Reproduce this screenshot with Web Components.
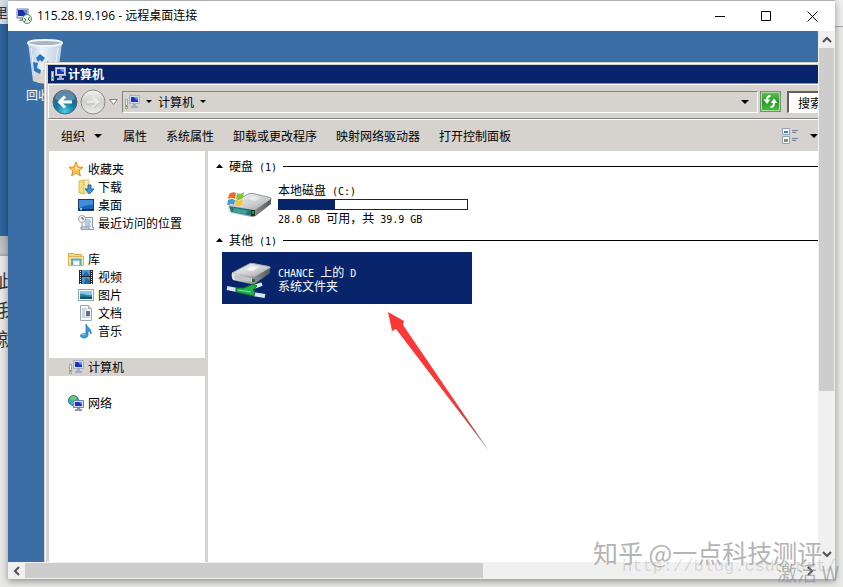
<!DOCTYPE html>
<html lang="zh-CN">
<head>
<meta charset="utf-8">
<title>115.28.19.196 - 远程桌面连接</title>
<style>
  html, body { margin: 0; height: 100%; overflow: hidden; }
  body { font: 12px/18px "Noto Sans CJK SC", "Liberation Sans", sans-serif; color: #000; background: #e4e4e2; }
</style>
</head>
<body>
<host-screen>
  <remote-window caption="115.28.19.196 - 远程桌面连接">
    <recycle-bin></recycle-bin>
    <explorer-window caption="计算机">
      <address-bar slot="nav" place="计算机"></address-bar>
      <command-bar slot="commands"></command-bar>
      <nav-tree slot="tree">
        <nav-group>
          <nav-item icon="star">收藏夹</nav-item>
          <nav-item icon="download" child>下载</nav-item>
          <nav-item icon="desktop" child>桌面</nav-item>
          <nav-item icon="recent" child>最近访问的位置</nav-item>
        </nav-group>
        <nav-group>
          <nav-item icon="library">库</nav-item>
          <nav-item icon="video" child>视频</nav-item>
          <nav-item icon="picture" child>图片</nav-item>
          <nav-item icon="document" child>文档</nav-item>
          <nav-item icon="music" child>音乐</nav-item>
        </nav-group>
        <nav-group><nav-item icon="computer" selected>计算机</nav-item></nav-group>
        <nav-group><nav-item icon="network">网络</nav-item></nav-group>
      </nav-tree>
      <drive-group label="硬盘" count="(1)">
        <drive-tile icon="disk" used="30">
          <span slot="name">本地磁盘<tt-run> (C:)</tt-run></span>
          <span slot="info"><tt-run>28.0 GB </tt-run>可用，共<tt-run> 39.9 GB</tt-run></span>
        </drive-tile>
      </drive-group>
      <drive-group label="其他" count="(1)">
        <drive-tile icon="netdisk" selected>
          <span slot="name"><tt-run>CHANCE </tt-run>上的<tt-run> D</tt-run></span>
          <span slot="info">系统文件夹</span>
        </drive-tile>
      </drive-group>
    </explorer-window>
    <red-arrow></red-arrow>
  </remote-window>
  <water-mark slot="over"></water-mark>
</host-screen>

<script>
const PC = `<rect x="5.5" y="1.5" width="10" height="8" fill="#d7dcea" stroke="#a9b0c8"/><path d="M7 3h7v5H7z" fill="#1a32c4"/><path d="M10 3h4v3c-2 0-3-1-4-3z" fill="#6f8cf0"/><path d="M9 10h3v2h2v2H7v-2h2z" fill="#a3acc6"/><rect x="1.500" y="5.500" width="2" height="9" fill="#e8eae4" stroke="#a5a89c"/><path d="M2 11h1v2H2z" fill="#58b83c"/>`;

const DISK = `<defs>
  <linearGradient id="top" x1="0" y1="0" x2="1" y2="1"><stop offset="0" stop-color="#fdfdfd"/><stop offset=".6" stop-color="#c8cacc"/><stop offset="1" stop-color="#8d9093"/></linearGradient>
  <linearGradient id="front"><stop offset="0" stop-color="#e8e9ea"/><stop offset=".5" stop-color="#9b9ea0"/><stop offset="1" stop-color="#56595b"/></linearGradient></defs>`;

const ICONS = {
  computer: [16, 16, PC],
  remote: [16, 16, `<rect x="1" y="1" width="11" height="9" fill="#cfd6e8" stroke="#7b87a8"/><path d="M2 2h9v6H2z" fill="#1c2da8"/><path d="M7 2h4v4C9 6 8 4 7 2z" fill="#6b7fdc"/><path d="M4 10h4v3H3z" fill="#9ba6c2"/><circle cx="11" cy="11" r="4.500" fill="#e9f2e5" stroke="#5d8a56"/><path d="M8 10l2 2-2 2M14 9l-2 2 2 2" fill="none" stroke="#3c7b3a"/>`],
  star: [16, 16, `<path d="M8 1l2 5 5 .3-4 3.500 1.400 5L8 12l-4.400 2.800L5 9.800 1 6.300 6 6z" fill="#ffc64d" stroke="#e18a1f"/><path d="M8 3l1 4 3 .5-4 1z" fill="#fff0b0"/>`],
  download: [16, 16, `<path d="M1 2l5-1v14l-5-1z" fill="#f7dc7e" stroke="#e0b95a"/><path d="M6 1h5v13H6z" fill="#fbeaa5" stroke="#e2c67c"/><path d="M10 6h3v4h3l-4.500 5L7 10h3z" fill="#3b95dc" stroke="#1b67aa"/>`],
  desktop: [16, 16, `<rect x=".5" y="2.500" width="15" height="11" fill="#1b63b8" stroke="#1a3a70"/><path d="M1 3h14v5C9 7 5 10 1 11z" fill="#3f8fdc"/><path d="M1 12h14v1H1z" fill="#17294a"/><path d="M2 11h2v2H2z" fill="#7bd0f0"/>`],
  recent: [16, 16, `<path d="M4 2.500h10.500v10H16v2H4z" fill="#eef3f9" stroke="#8a9bb0"/><path d="M7 5h5M7 7h6M7 9h5M7 11h6" stroke="#7f9fc4"/><circle cx="4" cy="4" r="3.500" fill="#fafafa" stroke="#98a2ad"/><path d="M4 2v2h2" fill="none" stroke="#556"/><path d="M3 12h8v2.500H3z" fill="#c4d2e2" stroke="#8a9bb0"/>`],
  library: [16, 16, `<path d="M.5 2.500h5l1 1h7v3H.5z" fill="#f5da7b" stroke="#d6aa43"/><path d="M.5 5.500h15v9H.5z" fill="#fbe89c" stroke="#ddb24f"/><path d="M4 14V8.500h8.500V14" fill="#d4effa" stroke="#57a7d5" stroke-width="2"/><path d="M6 11h5v3H6z" fill="#fff"/>`],
  video: [16, 16, `<path d="M1 1h14v14H1z" fill="#24272c"/><path d="M4 1h8v6H4zM4 8h8v7H4z" fill="#4e9bd4"/><path d="M4 7l4-5 4 5zM5 15l3-6 4 2v4z" fill="#2866a4"/><path d="M2.500 2v13M13.500 2v13" stroke="#e8e8e8" stroke-dasharray="1 1"/>`],
  picture: [16, 16, `<rect x=".5" y="2.500" width="15" height="11" fill="#fff" stroke="#91a3af"/><path d="M2 4h12v8H2z" fill="#82c9ef"/><path d="M2 7c4-1 6 2 12 1v4H2z" fill="#2c8797"/><path d="M2 10c4-1 8 0 12 0v2H2z" fill="#194f77"/>`],
  document: [16, 16, `<path d="M2.500.5h8l3 3v12h-11z" fill="#fff" stroke="#9aa6b2"/><path d="M10.500.5v3h3" fill="#dfe7ef" stroke="#9aa6b2"/><path d="M4 4h5M4 6h3M4 8h3M4 10h3M4 12h8" stroke="#9badbf"/><path d="M8 6h4v5H8z" fill="#4c779c"/>`],
  music: [16, 16, `<path d="M8 1c1 4 6 4 5 10-1-3-3-3-3-3v4c0 2-2 3-4 3-3 0-5-3-2-4 1-.5 3-.5 4 0z" fill="#33a0e8" stroke="#1665a8" stroke-width=".7"/><path d="M4 12c1-1 2-1 3 0" stroke="#a8e3ff" fill="none"/>`],
  network: [16, 16, `<circle cx="5.500" cy="5.500" r="5" fill="#35a6cf" stroke="#28799a"/><path d="M2 3c3-3 5-2 7 0L6 6 3 5zM2 8l4-1 1 3z" fill="#74c95a"/><path d="M5.500 5.500h10v7h-10z" fill="#d5dcec" stroke="#7482a6"/><path d="M7 7h7v4H7z" fill="#1833be"/><path d="M11 7h3v3z" fill="#6c8af0"/><path d="M9 13h3v1h2v2H7v-2h2z" fill="#8c98b8"/>`],
  refresh: [21, 21, `<defs><linearGradient id="g" x2="0" y2="1"><stop offset="0" stop-color="#6bc25c"/><stop offset=".5" stop-color="#249c24"/><stop offset="1" stop-color="#48c340"/></linearGradient></defs><rect x=".5" y=".5" width="20" height="20" fill="url(#g)" stroke="#7a8a78"/><path d="M1.500 1.500h18v18h-18z" fill="none" stroke="#a9dda0"/><path d="M10.500 5Q7 5 7 9" fill="none" stroke="#fff" stroke-width="2"/><path d="M3.500 8.500h7L7 13zM10.500 12h7L14 7.500z" fill="#fff"/><path d="M10.500 16Q14 16 14 12" fill="none" stroke="#fff" stroke-width="2"/>`],
  view: [16, 16, `<path d="M.5.500h7v6h-7zM.5 8.500h7v7h-7z" fill="#fff" stroke="#91a2ae"/><path d="M2 3h4v2H2z" fill="#2f83b7"/><path d="M2 11h4v3H2z" fill="#799b57"/><path d="M10 2.500h6M10 4.500h4M10 10.500h6M10 12.500h4" stroke="#71809f"/>`],
  back: [26, 26, `<defs><radialGradient id="b" cx=".5" cy=".9" r=".8"><stop offset="0" stop-color="#48d0e6"/><stop offset=".5" stop-color="#1479a4"/><stop offset="1" stop-color="#2b5d88"/></radialGradient></defs><circle cx="13" cy="13" r="12" fill="url(#b)" stroke="#59656f"/><path d="M3 10a10 9 0 0 1 20 0q-10 5-20 0z" fill="#fff" opacity=".25"/><path d="M20 13H8M13 7.500L7.500 13l5.500 5.500" fill="none" stroke="#fff" stroke-width="3"/>`],
  forward: [26, 26, `<defs><linearGradient id="f" x2="0" y2="1"><stop offset="0" stop-color="#f4f4f3"/><stop offset=".5" stop-color="#cfcfcd"/><stop offset="1" stop-color="#ececeb"/></linearGradient></defs><circle cx="13" cy="13" r="12" fill="url(#f)" stroke="#8c8c89"/><path d="M7 13h11M13 8l5 5-5 5" fill="none" stroke="#e9e9e8" stroke-width="3"/><path d="M7 15h8M14 19l5-5" fill="none" stroke="#b7b7b4"/>`],
  disk: [46, 32, `${DISK}<path d="M2 17L22 6q2-1 5-.5l17 4q2 1 1 2L29 24z" fill="url(#top)" stroke="#96999b"/><path d="M2 17q-1 5 2 8l22 4q3 0 5-2l14-11v-5L29 22z" fill="url(#front)"/><path d="M3 18l24 4v6L5 24z" fill="#2a7180"/><path d="M8 20l14 3-3 3-12-2z" fill="#39a59a"/><path d="M25 22h4v6h-4z" fill="#173c20"/><path d="M27 23v3" stroke="#67e053"/><path d="M3 6q4-3 7-1L9 11q-3-2-7 0z" fill="#ed6a2c"/><path d="M11 5q4 2 7-1l-1 6q-4 3-7 1z" fill="#83c43d"/><path d="M2 12q4-2 7 0l-1 5q-3-2-7 0z" fill="#3f9bdd"/><path d="M10 12q4 2 7-1l-1 6q-4 2-7 0z" fill="#fbc52f"/><path d="M26 8l8 2-5 3-7-2z" fill="#e9eaeb"/>`],
  netdisk: [46, 42, `${DISK}<path d="M6 16L23 7q2-1 4-.5l16 3q2 1 1 2L29 21z" fill="url(#top)" stroke="#a9acae"/><path d="M6 16q-1 4 1 7l18 4q3 1 5-1l14-10v-5L28 20z" fill="url(#front)"/><path d="M8 18l18 3v4L9 22z" fill="#c3c6c8"/><path d="M26 22h3v3h-3z" fill="#226c2a"/><path d="M25 9l8 1-6 4-7-1z" fill="#f4f4f4"/><path d="M28 30l8-3" stroke="#dfe3e6" stroke-width="4"/><path d="M1 31l10 2" stroke="#dce4f4" stroke-width="4"/><path d="M27 37l12 2" stroke="#dce4f4" stroke-width="4"/><path d="M10 31l8 0 9-4 4 2-4 4 2 2-1 4-18-4z" fill="#1fae4c" stroke="#0b7130"/><path d="M12 33l13 2" stroke="#78e58e"/>`],
  bin: [38, 48, `<defs><linearGradient id="c"><stop offset="0" stop-color="#b8cde2"/><stop offset=".4" stop-color="#f4f8fc"/><stop offset="1" stop-color="#c3d2e4"/></linearGradient></defs><path d="M2 5h34l-5 38q-12 5-24 0z" fill="url(#c)" opacity=".95"/><path d="M7 34l24-2-1 11q-11 5-22 0z" fill="#d8c9c0" opacity=".7"/><ellipse cx="19" cy="5" rx="17" ry="3" fill="#a9b6c1" stroke="#f2f5f8" stroke-width="2"/><path d="M5 10l4 28M32 10l-4 28" stroke="#fff" opacity=".7"/><path d="M10 20l4-4 5 4-3 4-2-2-2 2zM7 24l5 1-1 5 4 2-1 4-6-3zM18 27l4-4 3 7-3 4-5-1 3-3z" fill="#2c76bc"/>`],
};

// Small helper so each element only declares its markup.
class Base extends HTMLElement {
  constructor() {
    super();
    this.attachShadow({ mode: "open" });
  }
  connectedCallback() {
    this.shadowRoot.innerHTML = `<style>
      :host,*{box-sizing:border-box}
      button{margin:0;padding:0;border:0;background:none;font:inherit;color:inherit;display:flex;align-items:center;justify-content:center}
      a{color:inherit;text-decoration:none}
    </style>` + this.render();
  }
  attr(name) { return this.getAttribute(name) || ""; }
}

class UiIcon extends Base {
  render() {
    const [w, h, body] = ICONS[this.attr("name")];
    return `<style>:host{display:block;flex:none}svg{display:block}</style>
      <svg width="${w}" height="${h}" viewBox="0 0 ${w} ${h}" aria-hidden="true">${body}</svg>`;
  }
}

class DownTri extends Base {
  render() {
    return `<style>:host{display:block;flex:none;width:var(--tri,8px)}svg{display:block;width:100%}</style>
      <svg viewBox="0 0 8 4" aria-hidden="true"><path d="M0 0h8L4 4z"/></svg>`;
  }
}

// Half-width characters: 6px each, like the bitmap font of the old desktop.
class TtRun extends Base {
  render() {
    return `<style>:host{font-family:"DejaVu Sans Mono",monospace;font-size:10px;line-height:1;white-space:pre}</style><slot></slot>`;
  }
}

class HostScreen extends Base {
  render() {
    return `<style>
      :host{display:block;position:relative;height:100vh;overflow:hidden;padding:1px 8px 8px;
        background:linear-gradient(#c4c4c2,#c4c4c2) 0 0/100% 1px no-repeat,linear-gradient(#e8e8e7,#e8e8e7)}
      .left{position:absolute;left:0;top:0;width:8px;height:100%;overflow:hidden;display:flex;flex-direction:column;font-size:18px;line-height:29px;color:#333}
      .left div{flex:none;white-space:nowrap;text-indent:-2px}
      .left .tab{height:24px;line-height:24px;background:#d3dce7;font-size:14px;text-indent:-6px}
      .blue{height:212px;background:#2f639a}
      .bar{height:20px;background:linear-gradient(#b6b9bb,#c5c5c5 80%,#a8a8a8);margin-bottom:10px}
      .right{position:absolute;right:0;top:0;width:8px;height:27px;border-bottom:1px solid #aaa;background:#eee}
    </style>
    <div class="left"><div class="tab">里</div><div class="blue"></div><div class="bar"></div><div>此</div><div>我</div><div>就</div></div>
    <div class="right"></div>
    <slot></slot><slot name="over"></slot>`;
  }
}

class ScrollBar extends Base {
  render() {
    const v = this.hasAttribute("vertical");
    const [a, b] = v ? ["M1 7l4-4 4 4", "M1 3l4 4 4-4"] : ["M7 1L3 5l4 4", "M3 1l4 4-4 4"];
    const arrow = d => `<svg width="10" height="10" viewBox="0 0 10 10"><path d="${d}" fill="none" stroke="#505050" stroke-width="2"/></svg>`;
    return `<style>
      :host{display:flex;flex-direction:${v ? "column" : "row"};background:#f0f0f0}
      button{flex:none;width:${v ? 15 : 17}px;height:${v ? 17 : 15}px}
      .track{flex:1;display:flex;flex-direction:inherit}
      .thumb{flex:0 0 ${this.attr("size")}%;background:#cdcdcd}
    </style>
    <button aria-label="${v ? "向上" : "向左"}">${arrow(a)}</button>
    <div class="track"><div class="thumb"></div></div>
    <button aria-label="${v ? "向下" : "向右"}">${arrow(b)}</button>`;
  }
}

class RemoteWindow extends Base {
  render() {
    return `<style>
      :host{display:flex;flex-direction:column;position:relative;height:100%;background:#f0f0f0;box-shadow:0 2px 7px #0006}
      header{flex:none;height:30px;display:flex;align-items:center;gap:5px;padding-left:8px;background:#fff}
      .cap{flex:1;font:12px/18px "Open Sans","Noto Sans CJK SC",sans-serif}
      .sys{display:flex}
      .sys button{width:46px;height:30px}
      .view{flex:1;min-height:0;display:grid;grid-template:minmax(0,1fr) 15px/minmax(0,1fr) 15px;gap:1px;padding:0 1px 1px 0}
      .session{position:relative;overflow:hidden;background:#3a6ea5}
    </style>
    <header><ui-icon name="remote"></ui-icon><span class="cap">${this.attr("caption")}</span>
      <div class="sys">
        <button aria-label="最小化"><svg width="11" height="11"><path d="M0 5.500h10" stroke="#000"/></svg></button>
        <button aria-label="最大化"><svg width="11" height="11"><path d="M.5.500h9v9H.5z" fill="none" stroke="#000"/></svg></button>
        <button aria-label="关闭"><svg width="11" height="11"><path d="M.5.500l10 10M10.500.500l-10 10" stroke="#000"/></svg></button>
      </div>
    </header>
    <div class="view">
      <div class="session"><slot></slot></div>
      <scroll-bar vertical size="69"></scroll-bar>
      <scroll-bar size="59"></scroll-bar>
    </div>`;
  }
}

class RecycleBin extends Base {
  render() {
    return `<style>:host{position:absolute;left:18px;top:7px;color:#fff;white-space:nowrap}</style>
      <ui-icon name="bin"></ui-icon><span>回收站</span>`;
  }
}

class ExplorerWindow extends Base {
  render() {
    return `<style>
      :host{position:absolute;left:36px;top:31px;right:-90px;bottom:-30px;display:flex;flex-direction:column;
        background:#d6d3ce;border:1px solid #d6d3ce;box-shadow:inset 1px 1px #fff;padding:2px 3px 3px}
      .title{flex:none;height:18px;display:flex;align-items:center;gap:2px;padding-left:2px;background:#08246b;color:#fff;font-weight:bold}
      .panes{flex:1;min-height:0;display:grid;grid-template-columns:156px minmax(0,1fr);gap:3px;margin-left:1px}
      .panes>div{background:#fff}
      .tree{padding-top:9px}
      .files{padding:6px 0 0 8px}
    </style>
    <div class="title"><ui-icon name="computer"></ui-icon><span>${this.attr("caption")}</span></div>
    <slot name="nav"></slot><slot name="commands"></slot>
    <div class="panes"><div class="tree"><slot name="tree"></slot></div><div class="files"><slot></slot></div></div>`;
  }
}

class AddressBar extends Base {
  render() {
    return `<style>
      :host{--tri:6px;flex:none;display:flex;align-items:center;height:35px;margin-top:1px;padding:0 3px;border:1px solid #fff;border-bottom:1px solid #848284;border-right:0;box-shadow:0 1px #fff,0 -1px #8c8cae}
      .hist{display:flex;align-items:center;gap:2px;margin-right:3px}
      .round{border-radius:50%}
      .path{flex:1;height:22px;display:flex;align-items:center;gap:6px;padding:0 8px 0 1px;border:1px solid #848284;border-right-color:#fff;border-bottom-color:#fff}
      .path button{gap:6px}
      .grow{flex:1}
      .last{--tri:8px}
      .go{margin:0 6px 0 2px}
      input{width:114px;height:22px;margin:0;padding:0 9px;border:1px solid #fff;border-width:2px 1px 1px 2px;border-color:#606060 #fff #fff #606060;background:#fff;font:inherit;color:#000;border-radius:0}
      input::placeholder{color:#000;opacity:1}
    </style>
    <div class="hist">
      <button class="round" aria-label="后退"><ui-icon name="back"></ui-icon></button>
      <button class="round" aria-label="前进"><ui-icon name="forward"></ui-icon></button>
      <button aria-label="最近的页面"><svg width="11" height="8"><path d="M1.500 1.500h8l-4 5z" fill="#f4f4f4" stroke="#84827c"/></svg></button>
    </div>
    <div class="path">
      <ui-icon name="computer"></ui-icon>
      <button aria-label="根目录"><down-tri></down-tri></button>
      <button>${this.attr("place")}<down-tri></down-tri></button>
      <span class="grow"></span>
      <button class="last" aria-label="以前的位置"><down-tri></down-tri></button>
    </div>
    <button class="go" aria-label="刷新"><ui-icon name="refresh"></ui-icon></button>
    <input type="search" aria-label="搜索" placeholder="搜索">`;
  }
}

class CommandBar extends Base {
  render() {
    return `<style>
      :host{flex:none;display:flex;align-items:center;gap:19px;height:31px;margin-top:1px;padding:0 86px 0 13px}
      button{gap:9px}
      .menu{margin-right:2px}
      .view{margin-left:auto;gap:12px}
    </style>
    <button class="menu">组织<down-tri></down-tri></button>
    <button>属性</button><button>系统属性</button><button>卸载或更改程序</button><button>映射网络驱动器</button><button>打开控制面板</button>
    <button class="view" aria-label="更改视图"><ui-icon name="view"></ui-icon><down-tri></down-tri></button>`;
  }
}

class NavTree extends Base {
  render() {
    return `<style>:host{display:flex;flex-direction:column;gap:18px}</style><slot></slot>`;
  }
}

class NavGroup extends Base {
  render() {
    return `<style>:host{display:block}</style><slot></slot>`;
  }
}

class NavItem extends Base {
  render() {
    return `<style>
      :host{display:block}
      :host([selected]){background:#d6d3ce}
      a{display:flex;align-items:center;gap:4px;height:18px;padding-left:19px}
      :host([child]) a{padding-left:29px}
    </style>
    <a href="#"><ui-icon name="${this.attr("icon")}"></ui-icon><slot></slot></a>`;
  }
}

class DriveGroup extends Base {
  render() {
    return `<style>
      :host{display:block;margin-bottom:1px}
      .head{display:flex;align-items:center;width:100%;height:18px;gap:6px}
      .rule{flex:1;height:1px;background:#000}
      .items{padding:3px 0 0 6px}
    </style>
    <button class="head"><svg width="7" height="4"><path d="M0 4h7L3.500 0z"/></svg>
      <span>${this.attr("label")}<tt-run> ${this.attr("count")}</tt-run></span><span class="rule"></span></button>
    <div class="items"><slot></slot></div>`;
  }
}

class DriveTile extends Base {
  render() {
    const used = this.attr("used");
    return `<style>
      :host{display:flex;align-items:center;gap:6px;width:250px;height:52px;padding:0 4px;line-height:13px}
      :host([selected]){background:#08246b;color:#fff}
      .text{flex:1;display:flex;flex-direction:column}
      .bar{height:11px;margin:2px 0 1px;border:1px solid #08246b;background:#fff}
      .fill{height:100%;background:#08246b}
    </style>
    <ui-icon name="${this.attr("icon")}"></ui-icon>
    <div class="text"><slot name="name"></slot>
      ${used ? `<div class="bar" role="meter" aria-label="已用空间" aria-valuenow="${used}"><div class="fill" style="width:${used}%"></div></div>` : ""}
      <slot name="info"></slot></div>`;
  }
}

class RedArrow extends Base {
  render() {
    return `<style>:host{position:absolute;left:379px;top:280px}svg{display:block}</style>
      <svg width="104" height="142" viewBox="0 0 104 142" aria-hidden="true">
        <defs><linearGradient id="r" x2="1" y2="1"><stop offset=".6" stop-color="#fb3838"/><stop offset="1" stop-color="#a05058"/></linearGradient></defs>
        <path d="M1 1l16 9-1 4L102 140 9 18l-4 2z" fill="url(#r)"/>
      </svg>`;
  }
}

class WaterMark extends Base {
  render() {
    return `<style>
      span{position:absolute;white-space:nowrap;pointer-events:none}
      .site{left:593px;top:536px;font-size:25px;line-height:32px;color:#b4b4b4;text-shadow:-1px -1px #fff}
      .url{left:622px;top:555px;font:17px/24px "Liberation Mono",monospace;color:#0002}
      .act{left:777px;top:559px;font-size:20px;line-height:28px;color:#8889}
    </style>
    <span class="url">http://blog.csdn.net/</span><span class="site">知乎 @一点科技测评</span><span class="act">激活 W</span>`;
  }
}

customElements.define("ui-icon", UiIcon);
customElements.define("down-tri", DownTri);
customElements.define("tt-run", TtRun);
customElements.define("host-screen", HostScreen);
customElements.define("scroll-bar", ScrollBar);
customElements.define("remote-window", RemoteWindow);
customElements.define("recycle-bin", RecycleBin);
customElements.define("explorer-window", ExplorerWindow);
customElements.define("address-bar", AddressBar);
customElements.define("command-bar", CommandBar);
customElements.define("nav-tree", NavTree);
customElements.define("nav-group", NavGroup);
customElements.define("nav-item", NavItem);
customElements.define("drive-group", DriveGroup);
customElements.define("drive-tile", DriveTile);
customElements.define("red-arrow", RedArrow);
customElements.define("water-mark", WaterMark);
</script>
</body>
</html>
